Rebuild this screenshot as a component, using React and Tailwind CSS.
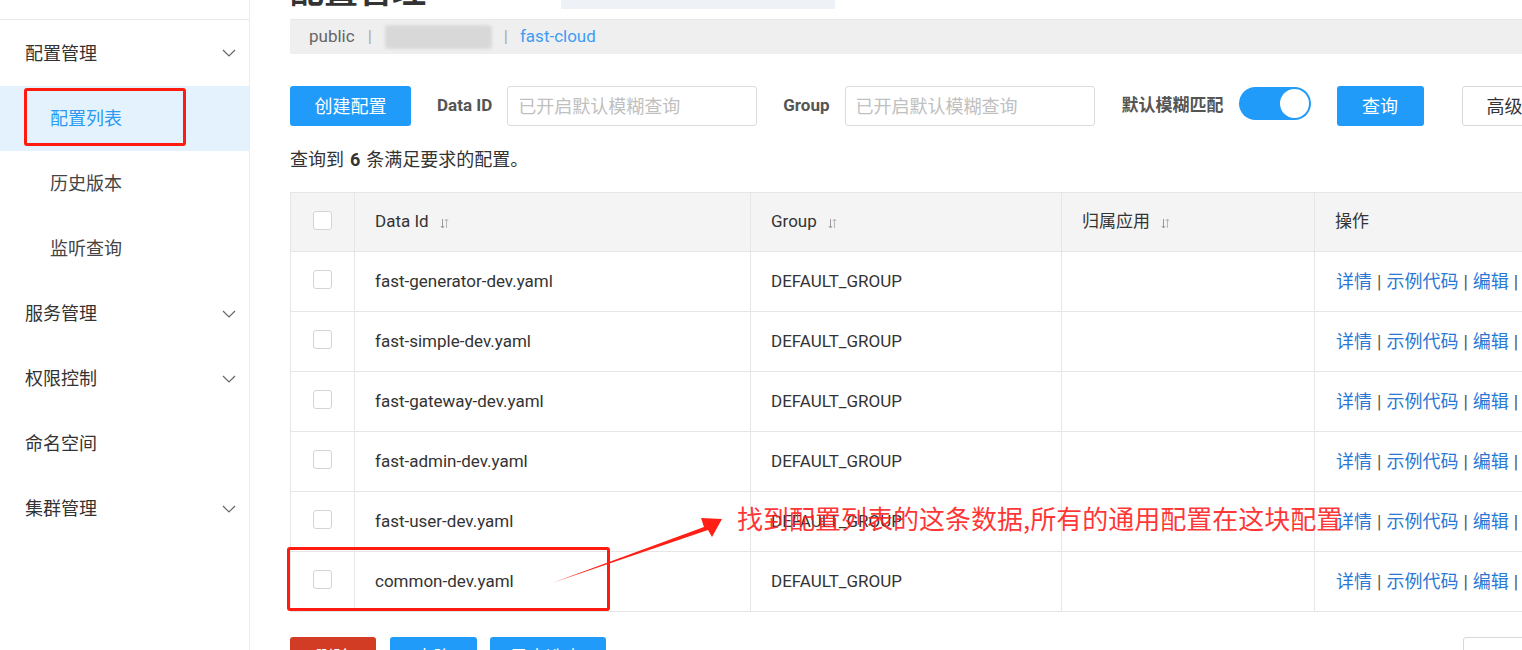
import React from "react";

const FONT = { fontFamily: 'Roboto, "Helvetica Neue", Arial, "Noto Sans CJK SC", sans-serif' };

function Chevron() {
  return (
    <svg width="14" height="8" viewBox="0 0 14 8" fill="none" className="mr-[13px]">
      <path d="M1 1 L7 7 L13 1" stroke="#666" strokeWidth="1.2" />
    </svg>
  );
}

function SortIcon() {
  return (
    <svg width="9" height="11" viewBox="0 0 9 11" className="ml-[11px] mt-[3px]">
      <path d="M2.5 1 V10 M0.8 8 L2.5 10 L4.2 8" stroke="#9a9a9a" strokeWidth="1" fill="none" />
      <path d="M6.5 10 V1 M4.8 3 L6.5 1 L8.2 3" stroke="#b7b7b7" strokeWidth="1" fill="none" />
    </svg>
  );
}

function Checkbox() {
  return <div className="w-[19px] h-[19px] border border-[#d4d4d4] rounded-[3px] bg-white" />;
}

const rows = [
  "fast-generator-dev.yaml",
  "fast-simple-dev.yaml",
  "fast-gateway-dev.yaml",
  "fast-admin-dev.yaml",
  "fast-user-dev.yaml",
  "common-dev.yaml",
];

const COLS = "grid grid-cols-[63px_396px_311px_253px_260px]";

export default function App() {
  return (
    <div className="relative w-[1522px] h-[650px] overflow-hidden flex bg-white text-[#333]" style={FONT}>
      {/* Sidebar */}
      <div className="w-[250px] shrink-0 border-r border-[#ececec]">
        <div className="h-[20px] border-b border-[#e8e8e8]" />
        <div className="h-[66px] flex items-center justify-between pl-[25px] text-[18px] text-[#333]">
          <span>配置管理</span>
          <Chevron />
        </div>
        <div className="h-[65px] flex items-center pl-[50px] text-[18px] text-[#2b9af3] bg-[#e4f2fd]">配置列表</div>
        <div className="h-[65px] flex items-center pl-[50px] text-[18px] text-[#444]">历史版本</div>
        <div className="h-[65px] flex items-center pl-[50px] text-[18px] text-[#444]">监听查询</div>
        <div className="h-[65px] flex items-center justify-between pl-[25px] text-[18px] text-[#333]">
          <span>服务管理</span>
          <Chevron />
        </div>
        <div className="h-[65px] flex items-center justify-between pl-[25px] text-[18px] text-[#333]">
          <span>权限控制</span>
          <Chevron />
        </div>
        <div className="h-[65px] flex items-center pl-[25px] text-[18px] text-[#333]">命名空间</div>
        <div className="h-[65px] flex items-center justify-between pl-[25px] text-[18px] text-[#333]">
          <span>集群管理</span>
          <Chevron />
        </div>
      </div>

      {/* Main */}
      <div className="flex-1 pl-[40px] min-w-0">
        <div className="h-[20px] border-b border-[#e8e8e8] flex items-start overflow-hidden">
          <span className="shrink-0 text-[34px] leading-none font-bold text-[#333] -mt-[26px] w-[271px]">配置管理</span>
          <div className="shrink-0 w-[274px] h-[9px] bg-[#eef1f6]" />
        </div>
        <div className="h-[34px] bg-[#efefef] flex items-center pl-[19px] text-[17px] text-[#666] whitespace-nowrap">
          <span>public</span>
          <span className="mx-[13px] text-[#aaa]">|</span>
          <div className="shrink-0 w-[107px] h-[24px] bg-[#d8d8d8] blur-[1.5px] rounded-[4px]" />
          <span className="mx-[12px] text-[#aaa]">|</span>
          <span className="text-[#3f9cf4]">fast-cloud</span>
        </div>

        {/* Toolbar */}
        <div className="mt-[32px] flex items-center h-[40px] whitespace-nowrap">
          <div className="shrink-0 w-[121px] h-[40px] rounded-[3px] bg-[#209bfa] text-white text-[18px] flex items-center justify-center">创建配置</div>
          <span className="shrink-0 ml-[26px] text-[17px] font-bold text-[#555]">Data ID</span>
          <div className="shrink-0 ml-[15px] w-[250px] h-[40px] border border-[#dcdcdc] rounded-[3px] flex items-center pl-[10px] text-[18px] text-[#c0c0c0]">已开启默认模糊查询</div>
          <span className="shrink-0 ml-[26px] text-[17px] font-bold text-[#555]">Group</span>
          <div className="shrink-0 ml-[15px] w-[250px] h-[40px] border border-[#dcdcdc] rounded-[3px] flex items-center pl-[10px] text-[18px] text-[#c0c0c0]">已开启默认模糊查询</div>
          <span className="shrink-0 ml-[27px] text-[17px] font-bold text-[#555]">默认模糊匹配</span>
          <div className="shrink-0 ml-[15px] w-[72px] h-[33px] rounded-full bg-[#209bfa] flex items-center justify-end pr-[2px] -mt-[6px]">
            <div className="w-[29px] h-[29px] rounded-full bg-white" />
          </div>
          <div className="shrink-0 ml-[26px] w-[87px] h-[40px] rounded-[3px] bg-[#209bfa] text-white text-[18px] flex items-center justify-center">查询</div>
          <div className="shrink-0 ml-[38px] w-[120px] h-[40px] rounded-[3px] border border-[#d8d8d8] text-[#333] text-[18px] flex items-center pl-[24px]">高级查询</div>
        </div>

        <div className="mt-[21px] h-[24px] flex items-center text-[18px] text-[#333] whitespace-nowrap">
          查询到 <span className="font-bold mx-[6px]">6</span> 条满足要求的配置。
        </div>

        {/* Table */}
        <div className="mt-[21px] w-[1290px] border-t border-l border-[#e6e6e6]">
          <div className={`${COLS} h-[59px] border-b border-[#e6e6e6] bg-[#f4f4f4] text-[17px] text-[#333]`}>
            <div className="flex items-center justify-center -mt-[4px]"><Checkbox /></div>
            <div className="border-l border-[#e6e6e6] flex items-center pl-[20px]">Data Id<SortIcon /></div>
            <div className="border-l border-[#e6e6e6] flex items-center pl-[20px]">Group<SortIcon /></div>
            <div className="border-l border-[#e6e6e6] flex items-center pl-[20px]">归属应用<SortIcon /></div>
            <div className="border-l border-[#e6e6e6] flex items-center pl-[20px]">操作</div>
          </div>
          {rows.map((r) => (
            <div key={r} className={`${COLS} h-[60px] border-b border-[#e6e6e6] text-[17px] text-[#333]`}>
              <div className="flex items-center justify-center -mt-[4px]"><Checkbox /></div>
              <div className="border-l border-[#e6e6e6] flex items-center pl-[20px]">{r}</div>
              <div className="border-l border-[#e6e6e6] flex items-center pl-[20px]">DEFAULT_GROUP</div>
              <div className="border-l border-[#e6e6e6]" />
              <div className="border-l border-[#e6e6e6] flex items-center pl-[21px] text-[18px] text-[#2a78d4] whitespace-nowrap">
                详情<span className="mx-[5px] text-[#555]">|</span>示例代码<span className="mx-[5px] text-[#555]">|</span>编辑<span className="mx-[5px] text-[#555]">|</span>删除
              </div>
            </div>
          ))}
        </div>

        {/* Bottom buttons */}
        <div className="mt-[25px] flex items-start whitespace-nowrap">
          <div className="shrink-0 w-[86px] h-[40px] rounded-[3px] bg-[#d23c25] text-white text-[18px] flex items-center justify-center">删除</div>
          <div className="shrink-0 ml-[14px] w-[87px] h-[40px] rounded-[3px] bg-[#209bfa] text-white text-[18px] flex items-center justify-center">克隆</div>
          <div className="shrink-0 ml-[13px] w-[116px] h-[40px] rounded-[3px] bg-[#209bfa] text-white text-[18px] flex items-center pl-[20px]">导出选中</div>
          <span className="shrink-0 ml-[767px] mt-[10px] text-[17px] text-[#555]">每页显示</span>
          <div className="shrink-0 ml-[22px] w-[80px] h-[40px] rounded-[3px] border border-[#d8d8d8] flex items-center pl-[14px] text-[17px]">10</div>
        </div>
      </div>

      {/* Annotations overlay */}
      <div className="absolute left-[24px] top-[88px] w-[162px] h-[58px] border-[3px] border-[#ff1b0f] rounded-[3px]" />
      <div className="absolute left-[287px] top-[547px] w-[323px] h-[64px] border-[3px] border-[#ff1b0f] rounded-[3px]" />
      <svg className="absolute left-0 top-0" width="1522" height="650" style={{ pointerEvents: "none" }}>
        <polygon points="552,583 704,527 701,518 722,519 712,537 708,530" fill="#ff1f14" />
      </svg>
      <div
        className="absolute left-[737px] top-[502px] text-[26px] leading-[32px] text-[#ff1a1a]/90 whitespace-nowrap"
        style={{ fontFamily: '"Noto Sans CJK SC", sans-serif' }}
      >
        找到配置列表的这条数据,所有的通用配置在这块配置
      </div>
    </div>
  );
}
